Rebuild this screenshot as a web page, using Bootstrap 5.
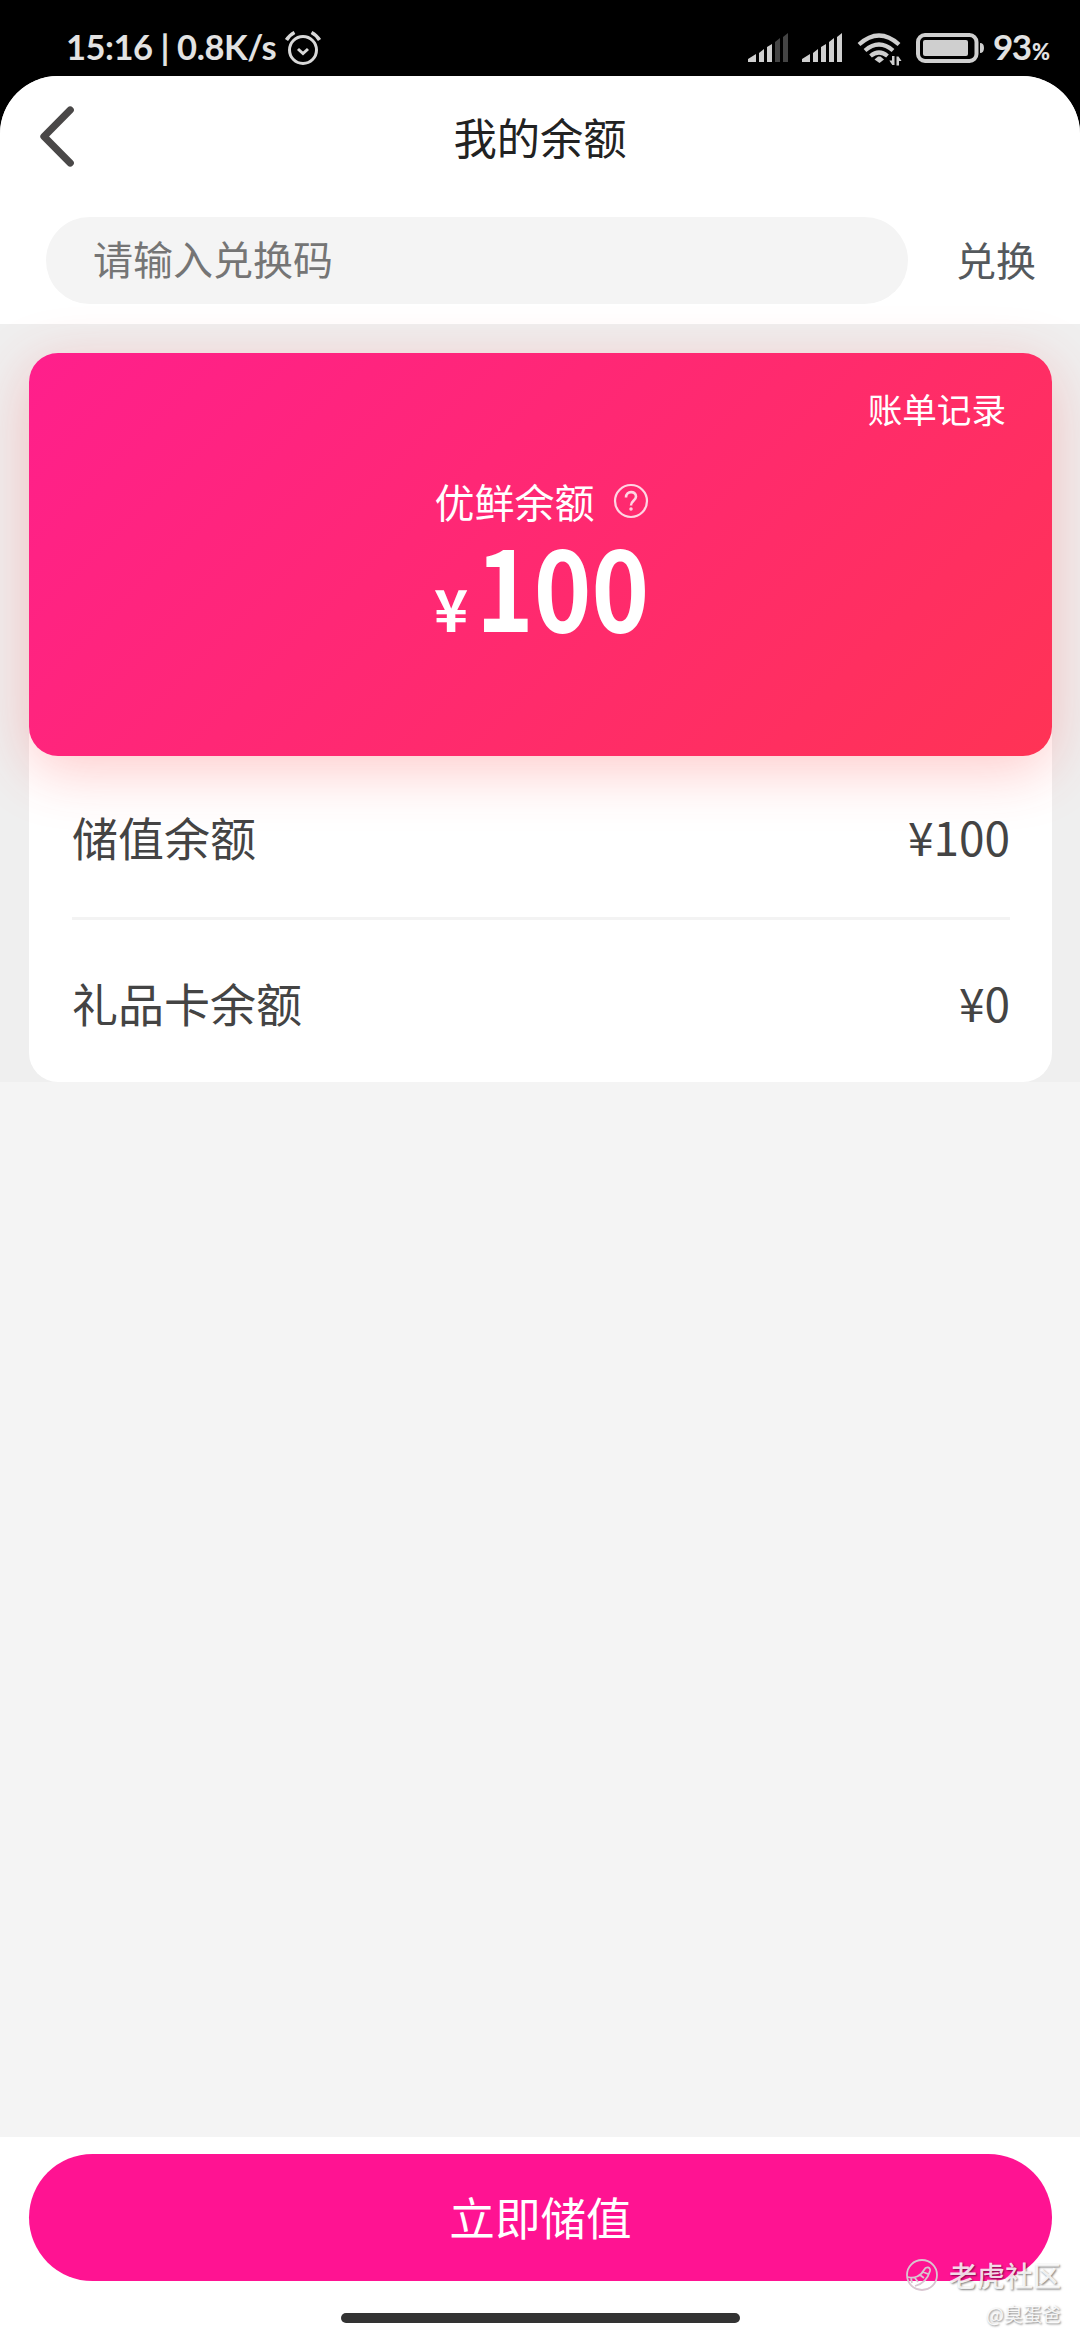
<!DOCTYPE html>
<html lang="zh-CN">
<head>
<meta charset="utf-8">
<meta name="viewport" content="width=device-width, initial-scale=1">
<title>我的余额</title>
<link rel="stylesheet" href="https://cdn.jsdelivr.net/npm/bootstrap@5.3.0/dist/css/bootstrap.min.css">
<style>
  body { font-family: "Noto Sans CJK SC", sans-serif; background: #000; color: #444; line-height: 1; }
  .phone { height: 2340px; }
  .status { height: 76px; padding: 17px 30px 0 66px; color: #e2e2e2; font-family: Lato, sans-serif; font-weight: 700; }
  .status-text { font-size: 34.5px; letter-spacing: -.45px; white-space: pre; padding-top: 13px; }
  .alarm { margin: 11px 0 0 8px; }
  .screen { background: #f4f4f4; border-radius: 58px 58px 0 0; }
  .titlebar { height: 124px; padding-bottom: 3px; }
  .title-text { font-size: 43.3px; color: #222; }
  .back-btn { left: 39px; top: 29px; line-height: 0; }
  .redeem { padding: 17px 44px 20px 46px; gap: 48px; }
  .redeem .form-control { height: 87px; background: #f4f4f4; font-size: 40px; padding: 0 47px 5px; line-height: 1; }
  .redeem .form-control::placeholder { color: #757575; opacity: 1; }
  .redeem-btn { font-size: 40px; color: #54595d; line-height: 1; padding-bottom: 3px; }
  .wallet { background: #efefef; padding: 29px 28px 0 29px; height: 758px; }
  .hero { height: 403px; border-radius: 29px; background: linear-gradient(135deg, #ff1f8c, #ff3355); box-shadow: 0 14px 58px rgba(255, 60, 60, .28); z-index: 1; }
  .bill-link { font-size: 34.6px; padding: 38px 46px 0 0; }
  .hero-label { font-size: 40px; margin-top: 55px; gap: 18px; padding-left: 2px; }
  .amount { font-weight: 700; line-height: 83px; height: 106px; margin-top: 22px; padding-left: 4px; }
  .amount-sign { font-size: 58px; }
  .amount-num { font-size: 110px; display: inline-block; transform: scaleX(.89); transform-origin: left; margin: 0 -20px 0 8px; }
  .details { margin-top: -29px; padding: 29px 42px 0 43px; border-radius: 0 0 29px 29px; height: 355px; }
  .detail-row { font-size: 46px; height: 161px; padding-bottom: 2px; }
  .detail-row + .detail-row { border-top: 3px solid #f3f3f3; height: 165px; padding: 2px 0 0; }
  .footer-bar { height: 203px; padding: 17px 28px 0 29px; }
  .charge-btn { height: 127px; background: #ff1392; font-size: 45.6px; padding: 0 0 3px; }
  .home-bar { width: 399px; height: 10px; background: #333; margin-top: 32px; }
  .mark-box { right: 19px; bottom: 17px; color: rgba(255,255,255,.85); text-shadow: 1px 1px 2px rgba(0,0,0,.5); gap: 13px; }
  .mark-name { font-size: 28px; font-weight: 500; gap: 11px; }
  .mark-user { font-size: 19px; }
</style>
<script src="https://cdn.jsdelivr.net/npm/bootstrap@5.3.0/dist/js/bootstrap.bundle.min.js"></script>
</head>
<body>
<div class="phone d-flex flex-column position-relative overflow-hidden">
  <header class="status d-flex justify-content-between align-items-start flex-shrink-0">
    <div class="d-flex">
      <span class="status-text">15:16 | 0.8K/s</span>
      <svg class="alarm" width="38" height="40" viewBox="0 0 38 40" fill="none" stroke="#d8d8d8" stroke-width="3"><circle cx="19" cy="22" r="13.500"/><path d="M14 21l5 4.500 5-4.500"/><path d="M2.500 12q3-5 8-7.500M35.500 12q-3-5-8-7.500" stroke-width="3.600"/></svg>
    </div>
    <svg width="306" height="52" viewBox="744 17 306 52">
      <g fill="#cfcfcf">
        <path d="M748 62v-3l8-5v8zM759 62v-9l5-4v13zM767 62v-15l5-3v18z"/>
        <path fill="#444" d="M775 62v-20l5-4v24zM783 62v-25l5-4v29z"/>
        <path d="M802 62v-3l8-5v8zM813 62v-9l5-4v13zM821 62v-15l5-3v18zM829 62v-20l5-4v24zM837 62v-25l5-4v29z"/>
        <path d="M874.500 59.500l3.500-3h2.500l3.500 3-4.500 3.500z"/>
        <path d="M892 56h2.500v9h-2.200l-3-4.500h2.700zM896.500 65.500v-9h2l3 4.500h-2.500v4.500z"/>
      </g>
      <g fill="none" stroke="#cfcfcf" stroke-width="4.200">
        <path d="M859 44.500q20-18 40 0M865 50.500q14-12 28 0M870.500 56q8.500-7 17 0"/>
      </g>
      <rect x="918" y="35" width="58.500" height="26" rx="7" fill="none" stroke="#cfcfcf" stroke-width="4"/>
      <rect x="923" y="40" width="45" height="16" rx="2" fill="#cfcfcf"/>
      <path d="M980 43q4 0 4 5t-4 5z" fill="#cfcfcf"/>
      <text x="993" y="60" fill="#e2e2e2" font-family="Lato" font-weight="700" font-size="35" textLength="39">93</text>
      <text x="1032" y="60" fill="#e2e2e2" font-family="Lato" font-weight="900" font-size="22" textLength="18" lengthAdjust="spacingAndGlyphs">%</text>
    </svg>
  </header>

  <main class="screen d-flex flex-column flex-grow-1 overflow-hidden">
    <section class="bg-white">
      <div class="titlebar d-flex justify-content-center align-items-center position-relative">
        <a class="back-btn position-absolute" href="#" aria-label="返回"><svg width="38" height="64" viewBox="0 0 38 64" fill="none" stroke="#4a4848" stroke-width="7.300" stroke-linecap="round" stroke-linejoin="round"><path d="M31.200 5L5 31.500l26.200 26.500"/></svg></a>
        <h1 class="title-text m-0 fw-normal">我的余额</h1>
      </div>
      <form class="redeem d-flex align-items-center">
        <input class="form-control rounded-pill border-0" type="text" placeholder="请输入兑换码">
        <button type="button" class="redeem-btn btn border-0 px-0 pt-0 flex-shrink-0">兑换</button>
      </form>
    </section>

    <section class="wallet">
      <div class="hero position-relative text-white d-flex flex-column">
        <a class="bill-link text-end text-white text-decoration-none" href="#">账单记录</a>
        <div class="hero-label d-flex justify-content-center align-items-center">
          <span>优鲜余额</span>
          <svg width="36" height="36" viewBox="0 0 36 36" fill="none" stroke="#ffd5e3" stroke-width="2.200"><circle cx="18" cy="18" r="16"/><path d="M13 14.500c0-7 10-7 10-1 0 4-5 4-5 9" stroke-width="2.600"/><circle cx="18" cy="26" r="1" stroke-width="1.500"/></svg>
        </div>
        <div class="amount d-flex justify-content-center align-items-baseline">
          <span class="amount-sign">¥</span><span class="amount-num">100</span>
        </div>
      </div>
      <div class="details bg-white">
        <div class="detail-row d-flex justify-content-between align-items-center"><span>储值余额</span><span>¥100</span></div>
        <div class="detail-row d-flex justify-content-between align-items-center"><span>礼品卡余额</span><span>¥0</span></div>
      </div>
    </section>

    <footer class="footer-bar bg-white mt-auto">
      <button type="button" class="charge-btn btn rounded-pill w-100 border-0 text-white">立即储值</button>
      <div class="home-bar rounded-pill mx-auto"></div>
    </footer>
  </main>

  <div class="mark-box position-absolute d-flex flex-column align-items-end">
    <div class="mark-name d-flex align-items-center">
      <svg width="32" height="32" viewBox="0 0 32 32" fill="none" stroke="#d9c5d0" stroke-width="1.800"><circle cx="16" cy="16" r="15"/><path d="M2 18c6 2 13-1 16-7 2-4 7-3 6 1-2 7-7 13-15 15M5 19l1 5M9 19l3 4M14 16l4 3M17 13l5 2"/></svg>
      <span>老虎社区</span>
    </div>
    <span class="mark-user">@臭蛋爸</span>
  </div>
</div>
</body>
</html>
